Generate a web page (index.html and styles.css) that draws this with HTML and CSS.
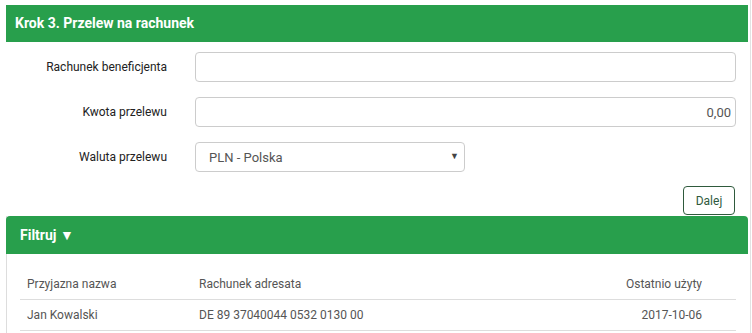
FILE: index.html
```html
<!DOCTYPE html>
<html lang="pl">
<head>
    <meta charset="UTF-8">
    <meta name="viewport" content="width=device-width, initial-scale=1.0">
    <title>Przelew na rachunek</title>
    <link rel="stylesheet" href="styles.css">
</head>
<body>
    <div class="page">
        <section class="step">
            <h2 class="step-title">Krok 3. Przelew na rachunek</h2>
            <form class="transfer-form">
                <div class="form-row">
                    <label for="account">Rachunek beneficjenta</label>
                    <input type="text" id="account" class="field">
                </div>
                <div class="form-row">
                    <label for="amount">Kwota przelewu</label>
                    <input type="text" id="amount" class="field field-amount" value="0,00">
                </div>
                <div class="form-row">
                    <label for="currency">Waluta przelewu</label>
                    <div class="select-wrap">
                        <select id="currency" class="field field-select">
                            <option>PLN - Polska</option>
                        </select>
                        <span class="select-arrow">▼</span>
                    </div>
                </div>
                <div class="form-actions">
                    <button type="button" class="btn-next">Dalej</button>
                </div>
            </form>
        </section>

        <section class="filter-panel">
            <h2 class="filter-title">Filtruj ▼</h2>
            <div class="filter-body">
                <table class="recipients">
                    <thead>
                        <tr>
                            <th class="col-name">Przyjazna nazwa</th>
                            <th>Rachunek adresata</th>
                            <th class="col-date">Ostatnio użyty</th>
                        </tr>
                    </thead>
                    <tbody>
                        <tr>
                            <td>Jan Kowalski</td>
                            <td>DE 89 37040044 0532 0130 00</td>
                            <td class="col-date">2017-10-06</td>
                        </tr>
                    </tbody>
                </table>
            </div>
        </section>
    </div>
</body>
</html>
```

FILE: styles.css
```css
body {
  margin: 0;
  font-family: Roboto, "Liberation Sans", sans-serif;
  background: #fff;
  color: #333;
}

.page {
  width: 742px;
  min-height: 340px;
  padding: 5px 2px 0 6px;
  border-right: 1px solid #e2e2e2;
}

.step-title {
  margin: 0;
  height: 37px;
  line-height: 37px;
  padding-left: 9px;
  background-color: #289f4c;
  color: #fff;
  font-size: 14px;
  font-weight: 700;
}

.transfer-form {
  padding-top: 10px;
}

.form-row {
  display: flex;
  align-items: center;
  margin-bottom: 15px;
}

.form-row label {
  width: 161px;
  text-align: right;
  margin-right: 28px;
  font-size: 12px;
  font-weight: 400;
  color: #222;
}

.field {
  box-sizing: border-box;
  width: 541px;
  height: 30px;
  padding: 0 13px;
  border: 1px solid #ccc;
  border-radius: 4px;
  font-family: inherit;
  font-size: 13px;
  color: #555;
  background: #fff;
}

.field-amount {
  text-align: right;
  padding-right: 4px;
}

.select-wrap {
  position: relative;
}

.field-select {
  width: 270px;
  appearance: none;
  -webkit-appearance: none;
}

.select-arrow {
  position: absolute;
  right: 6px;
  top: 9px;
  font-size: 9px;
  color: #444;
  pointer-events: none;
}

.form-actions {
  display: flex;
  justify-content: flex-end;
  padding-right: 13px;
  margin-top: -1px;
}

.btn-next {
  width: 52px;
  height: 29px;
  padding: 0;
  background: #fff;
  border: 1px solid #2f5a3d;
  border-radius: 4px;
  color: #2f5a3d;
  font-family: inherit;
  font-size: 12px;
}

.filter-panel {
  margin-top: 1px;
  border-left: 1px solid #ddd;
  min-height: 120px;
}

.filter-title {
  margin: 0 0 0 -1px;
  height: 38px;
  line-height: 38px;
  padding-left: 14px;
  background-color: #289f4c;
  border-radius: 4px 4px 0 0;
  color: #fff;
  font-size: 14px;
  font-weight: 700;
}

.filter-body {
  padding: 15px 12px 0 13px;
}

.recipients {
  width: 100%;
  border-collapse: collapse;
  font-size: 12px;
  color: #555;
}

.recipients th,
.recipients td {
  height: 30px;
  padding: 0 7px;
  text-align: left;
  font-weight: 400;
  border-bottom: 1px solid #ddd;
}

.recipients .col-name {
  width: 158px;
}

.recipients .col-date {
  text-align: right;
  padding-right: 34px;
}
```
